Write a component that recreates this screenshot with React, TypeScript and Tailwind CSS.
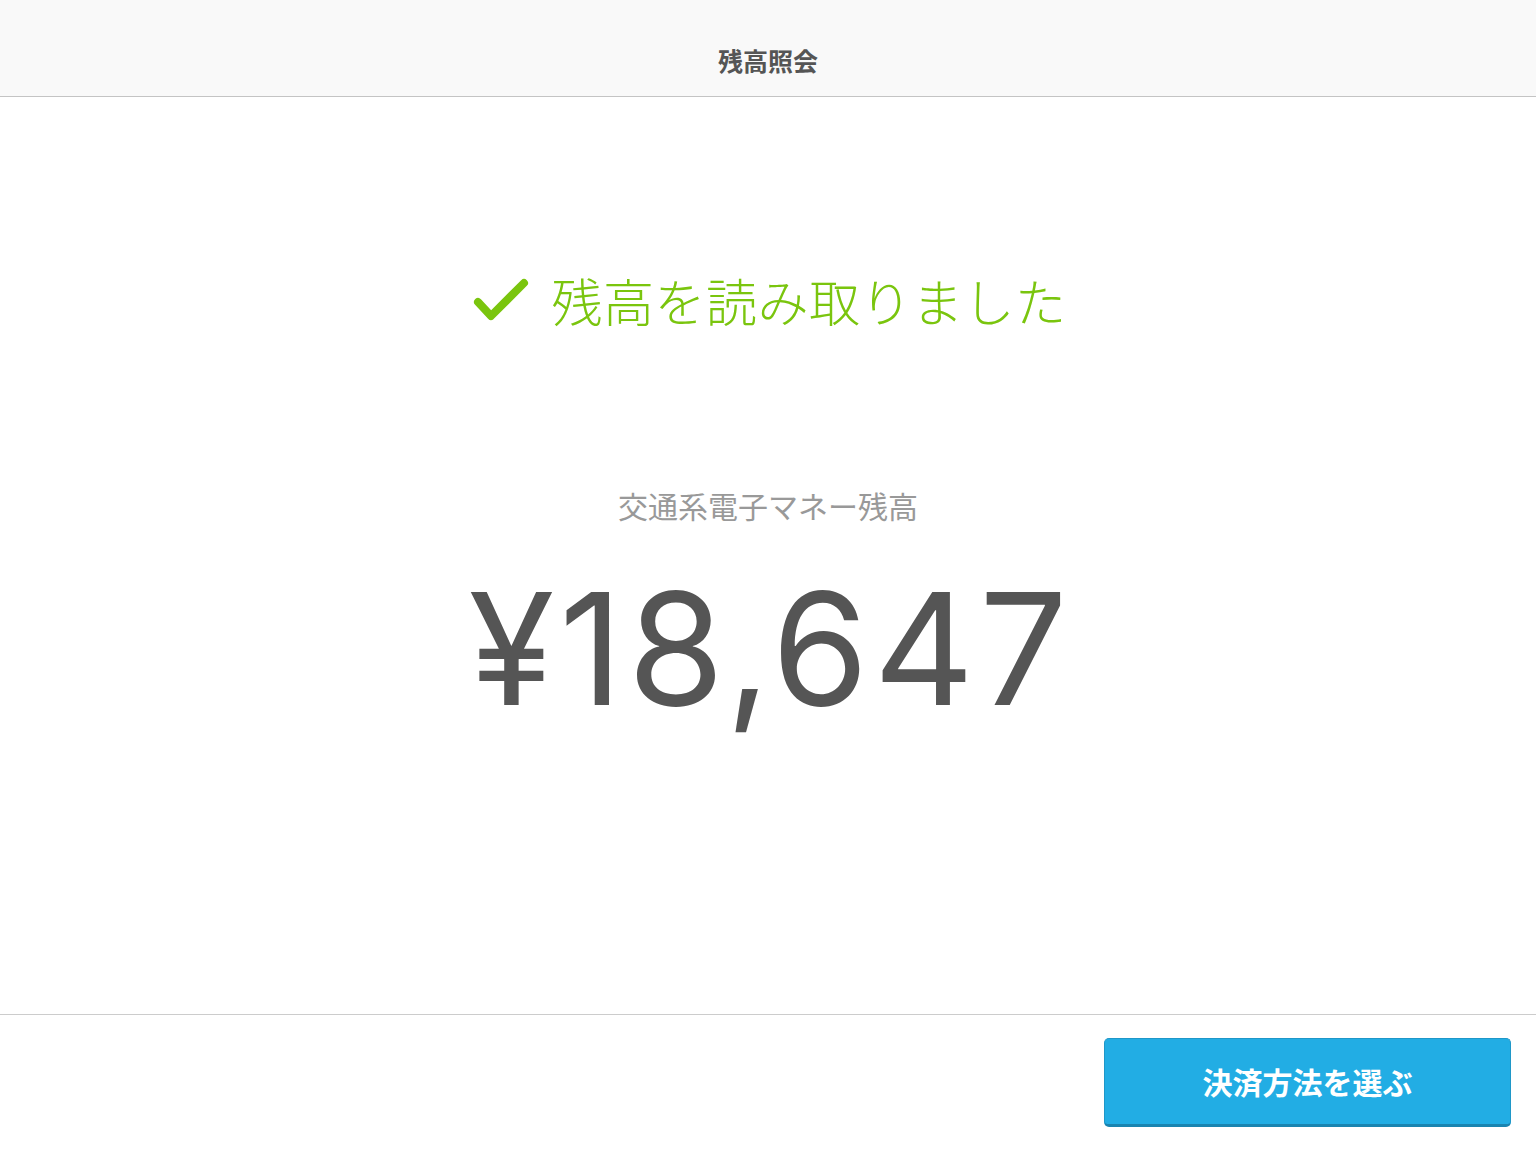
const jp = "font-['Noto_Sans_CJK_JP',sans-serif]";

function CheckMark() {
  return (
    <svg width="56" height="46" viewBox="0 0 56 46" fill="none" aria-hidden="true">
      <polyline
        points="5,24 18,38 51,5"
        stroke="#7ac50e"
        strokeWidth="8"
        strokeLinecap="round"
        strokeLinejoin="round"
      />
    </svg>
  );
}

export default function App() {
  return (
    <div className={`flex h-[1152px] w-[1536px] flex-col bg-white ${jp}`}>
      {/* ヘッダー */}
      <header className="flex h-[97px] shrink-0 items-end justify-center border-b border-[#c4c4c4] bg-[#f9f9f9] pb-[23px]">
        <h1 className="text-[25px] font-bold leading-none text-[#555555]">残高照会</h1>
      </header>

      {/* 残高表示 */}
      <main className="flex flex-1 flex-col items-center pt-[178px]">
        <div className="flex items-center gap-[22px] pl-[4px] text-[#7ac50e]">
          <CheckMark />
          <span className="text-[51px] leading-none font-light tracking-[0.5px]">残高を読み取りました</span>
        </div>

        <p className="mt-[164px] text-[30px] leading-none text-[#999999]">交通系電子マネー残高</p>

        <p className="mt-[51px] pl-[5px] font-['Inter',sans-serif] text-[156px] leading-none tracking-[5px] text-[#555555]">¥18,647</p>
      </main>

      {/* フッター */}
      <footer className="flex shrink-0 justify-end border-t border-[#cccccc] px-[25px] pt-[23px] pb-[25px]">
        <button className="h-[89px] w-[407px] rounded-[5px] border border-[#1f97c8] border-b-[3px] border-b-[#1a84b0] bg-[#22ade4] text-[30px] font-bold text-white">
          決済方法を選ぶ
        </button>
      </footer>
    </div>
  );
}
